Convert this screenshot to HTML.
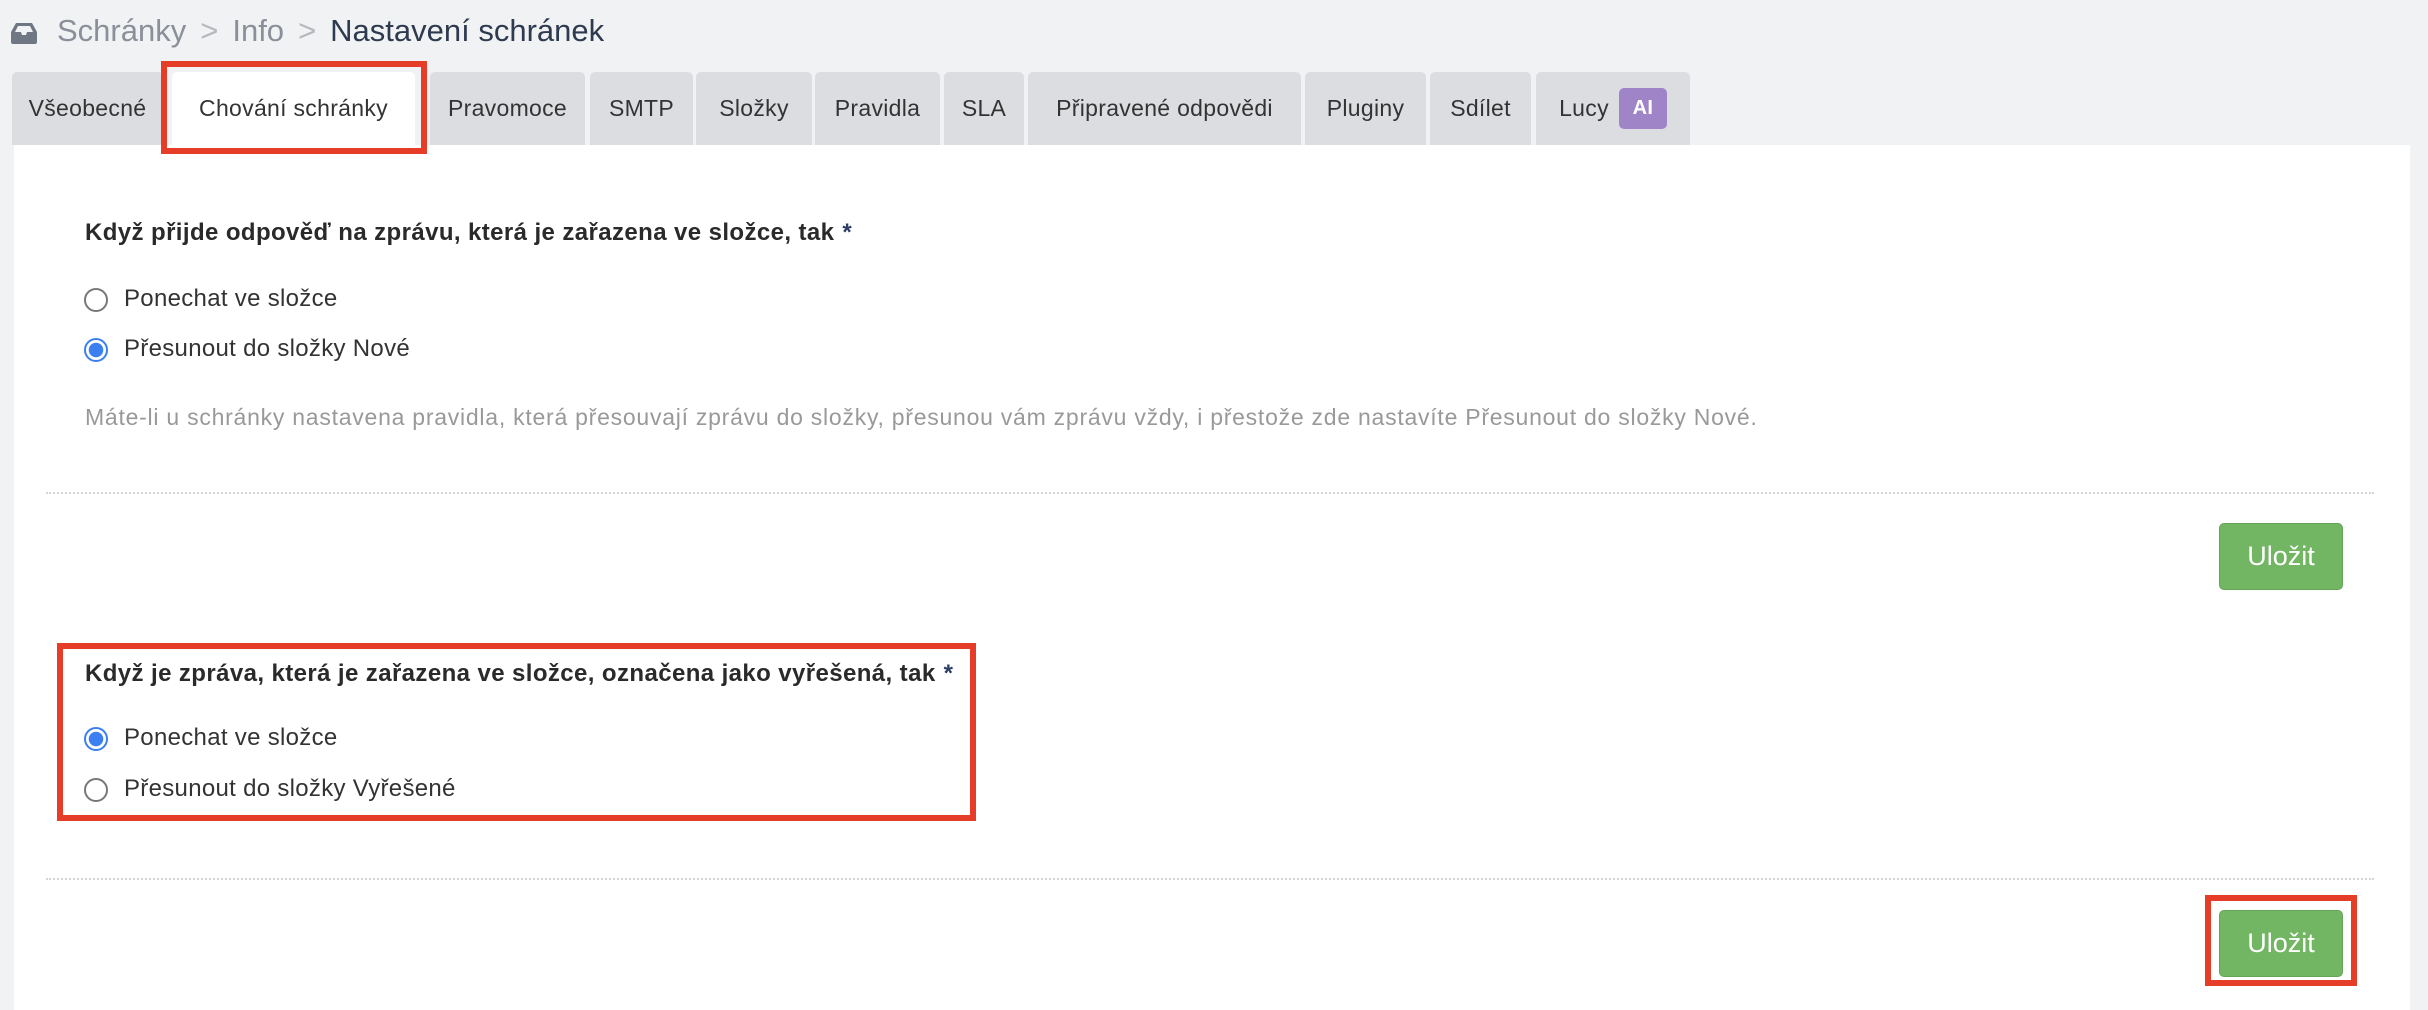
<!DOCTYPE html>
<html><head><meta charset="utf-8"><style>
*{margin:0;padding:0;box-sizing:border-box}
body{width:2428px;height:1010px;background:#f1f2f4;font-family:"Liberation Sans",sans-serif;position:relative;overflow:hidden;color:#333}
.abs{position:absolute}
.bc{top:13px;left:57px;font-size:31px;color:#8a8f99;white-space:nowrap}
.bc b{font-weight:normal;color:#2e3a4f}
.bc i{font-style:normal;color:#b5b8be;margin:0 14px}
.tab{position:absolute;top:72px;height:73px;background:#dcdde1;border-radius:5px 5px 0 0;font-size:23px;letter-spacing:.3px;color:#333;display:flex;align-items:center;justify-content:center;white-space:nowrap}
.tab.act{background:#fff}
.content{left:14px;top:145px;width:2396px;height:865px;background:#fff}
.h{font-size:24px;letter-spacing:.4px;font-weight:bold;color:#2a2a2a;white-space:nowrap}
.h span{color:#2c3e66;margin-left:8px}
.lbl{font-size:24px;letter-spacing:.3px;color:#333;white-space:nowrap}
.radio{width:24px;height:24px;border-radius:50%;border:2px solid #777;background:#fff}
.radio.on{border:2px solid #3b7ff0;background:radial-gradient(circle,#3b7ff0 0 7px,#fff 7.5px)}
.help{font-size:23px;letter-spacing:.75px;color:#999;white-space:nowrap}
.dot{height:0;border-top:2px dotted #d5d5d5;left:46px;width:2328px}
.btn{background:#72b563;border:1px solid #64a656;border-radius:5px;color:#fff;font-size:27px;display:flex;align-items:center;justify-content:center;width:124px;height:67px;left:2219px}
.red{border:6px solid #e53d27}
</style></head><body>
<svg class="abs" style="left:11px;top:22px" width="26" height="22" viewBox="0 0 26 22"><path d="M5 1h16l5 9v10a2 2 0 0 1-2 2H2a2 2 0 0 1-2-2V10z" fill="#707784"/><path d="M4 10l3-6h12l3 6h-6l-1 3h-4l-1-3z" fill="#f1f2f4"/></svg>
<div class="abs bc">Schránky<i>&gt;</i>Info<i>&gt;</i><b>Nastavení schránek</b></div>

<div class="tab" style="left:12px;width:151px">Všeobecné</div>
<div class="tab act" style="left:172px;width:243px">Chování schránky</div>
<div class="tab" style="left:430px;width:155px">Pravomoce</div>
<div class="tab" style="left:590px;width:103px">SMTP</div>
<div class="tab" style="left:696px;width:116px">Složky</div>
<div class="tab" style="left:815px;width:125px">Pravidla</div>
<div class="tab" style="left:944px;width:80px">SLA</div>
<div class="tab" style="left:1028px;width:273px">Připravené odpovědi</div>
<div class="tab" style="left:1305px;width:121px">Pluginy</div>
<div class="tab" style="left:1430px;width:101px">Sdílet</div>
<div class="tab" style="left:1536px;width:154px">Lucy<span style="display:inline-flex;align-items:center;justify-content:center;background:#a084c8;color:#fff;font-weight:bold;font-size:20px;width:48px;height:41px;border-radius:5px;margin-left:10px">AI</span></div>

<div class="abs content"></div>
<div class="abs red" style="left:161px;top:61px;width:266px;height:93px"></div>

<div class="abs h" style="left:85px;top:219px">Když přijde odpověď na zprávu, která je zařazena ve složce, tak<span>*</span></div>
<div class="abs radio" style="left:84px;top:288px"></div>
<div class="abs lbl" style="left:124px;top:285px">Ponechat ve složce</div>
<div class="abs radio on" style="left:84px;top:338px"></div>
<div class="abs lbl" style="left:124px;top:335px">Přesunout do složky Nové</div>
<div class="abs help" style="left:85px;top:404px">Máte-li u schránky nastavena pravidla, která přesouvají zprávu do složky, přesunou vám zprávu vždy, i přestože zde nastavíte Přesunout do složky Nové.</div>
<div class="abs dot" style="top:492px"></div>
<div class="abs btn" style="top:523px">Uložit</div>

<div class="abs h" style="left:85px;top:660px">Když je zpráva, která je zařazena ve složce, označena jako vyřešená, tak<span>*</span></div>
<div class="abs radio on" style="left:84px;top:727px"></div>
<div class="abs lbl" style="left:124px;top:724px">Ponechat ve složce</div>
<div class="abs radio" style="left:84px;top:778px"></div>
<div class="abs lbl" style="left:124px;top:775px">Přesunout do složky Vyřešené</div>
<div class="abs red" style="left:57px;top:643px;width:919px;height:178px"></div>
<div class="abs dot" style="top:878px"></div>
<div class="abs btn" style="top:910px">Uložit</div>
<div class="abs red" style="left:2205px;top:895px;width:152px;height:91px"></div>
</body></html>
